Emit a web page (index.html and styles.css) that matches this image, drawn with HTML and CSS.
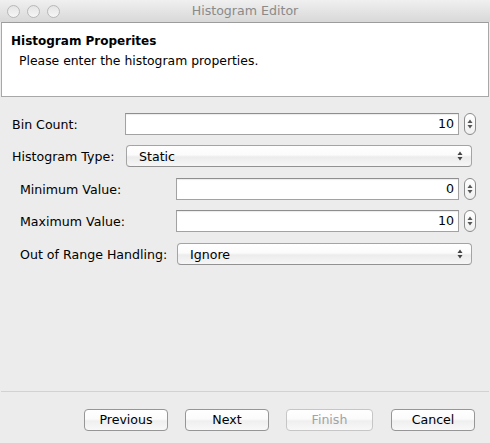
FILE: index.html
```html
<!DOCTYPE html>
<html>
<head>
<meta charset="utf-8">
<link rel="stylesheet" href="styles.css">
</head>
<body>
<div class="window">
  <div class="titlebar">
    <div class="lights">
      <span class="light"></span><span class="light"></span><span class="light"></span>
    </div>
    <div class="title">Histogram Editor</div>
  </div>
  <div class="header">
    <div class="header-title">Histogram Properites</div>
    <div class="header-sub">Please enter the histogram properties.</div>
  </div>
  <div class="form">
    <div class="row r1">
      <label class="lbl w-bin">Bin Count:</label>
      <div class="field">10</div>
      <div class="spin"><svg width="12" height="22" viewBox="0 0 12 22"><path d="M6 6.5 L8.5 10 L3.5 10 Z" fill="#555"/><path d="M6 15.5 L8.5 12 L3.5 12 Z" fill="#555"/></svg></div>
    </div>
    <div class="row r2">
      <label class="lbl w-type">Histogram Type:</label>
      <div class="combo"><span>Static</span><svg class="arr" width="8" height="12" viewBox="0 0 8 12"><path d="M4 1.5 L6.5 5 L1.5 5 Z" fill="#444"/><path d="M4 10.5 L6.5 7 L1.5 7 Z" fill="#444"/></svg></div>
    </div>
    <div class="nested">
      <div class="row r3">
        <label class="lbl w-min">Minimum Value:</label>
        <div class="field">0</div>
        <div class="spin"><svg width="12" height="22" viewBox="0 0 12 22"><path d="M6 6.5 L8.5 10 L3.5 10 Z" fill="#555"/><path d="M6 15.5 L8.5 12 L3.5 12 Z" fill="#555"/></svg></div>
      </div>
      <div class="row r4">
        <label class="lbl w-min">Maximum Value:</label>
        <div class="field">10</div>
        <div class="spin"><svg width="12" height="22" viewBox="0 0 12 22"><path d="M6 6.5 L8.5 10 L3.5 10 Z" fill="#555"/><path d="M6 15.5 L8.5 12 L3.5 12 Z" fill="#555"/></svg></div>
      </div>
      <div class="row r5">
        <label class="lbl w-oor">Out of Range Handling:</label>
        <div class="combo"><span>Ignore</span><svg class="arr" width="8" height="12" viewBox="0 0 8 12"><path d="M4 1.5 L6.5 5 L1.5 5 Z" fill="#444"/><path d="M4 10.5 L6.5 7 L1.5 7 Z" fill="#444"/></svg></div>
      </div>
    </div>
  </div>
  <div class="sep"></div>
  <div class="buttons">
    <button class="btn">Previous</button>
    <button class="btn">Next</button>
    <button class="btn disabled">Finish</button>
    <button class="btn">Cancel</button>
  </div>
</div>
</body>
</html>
```
FILE: styles.css
```css
* { box-sizing: border-box; }
html, body { margin: 0; padding: 0; }
body {
  width: 490px;
  height: 443px;
  background: #ececec;
  font-family: "DejaVu Sans", "Liberation Sans", sans-serif;
  font-size: 12.6px;
  color: #000;
  overflow: hidden;
}
.window { width: 490px; height: 443px; display: flex; flex-direction: column; }
.titlebar {
  height: 22px;
  background: linear-gradient(#f0f0f0, #d8d8d8);
  display: flex;
  align-items: center;
  position: relative;
  flex: none;
}
.lights { display: flex; gap: 7px; padding-left: 7px; }
.light {
  width: 13px; height: 13px; border-radius: 50%;
  border: 1px solid #b8b8b8;
  background: linear-gradient(#e4e4e4, #f6f6f6);
}
.title {
  position: absolute; left: 0; right: 0; top: 0; height: 22px;
  line-height: 22px; text-align: center;
  color: #8a8a8a; font-size: 12.6px;
}
.header {
  margin: 0 1px;
  height: 75px;
  background: #fff;
  border: 1px solid #a8a8a8;
  border-top-color: #9c9c9c;
  padding: 8px 0 0 9px;
  flex: none;
}
.header-title { font-weight: bold; font-size: 12px; height: 20px; line-height: 20px; }
.header-sub { padding-left: 8px; font-size: 12.4px; line-height: 20px; }
.form { padding: 16px 14px 0 12px; display: flex; flex-direction: column; }
.nested { padding-left: 8px; display: flex; flex-direction: column; }
.row { display: flex; align-items: center; height: 22px; }
.r2 { margin-top: 10px; }
.r3 { margin-top: 11px; }
.r4 { margin-top: 10px; }
.r5 { margin-top: 11px; }
.lbl { flex: none; white-space: nowrap; }
.w-bin { width: 113px; }
.w-type { width: 114px; }
.w-min { width: 156px; }
.w-oor { width: 157px; }
.field {
  flex: 1;
  height: 22px;
  background: #fff;
  border: 1px solid #a2a2a2;
  border-top-color: #8e8e8e;
  box-shadow: inset 0 1px 1px rgba(0,0,0,0.08);
  text-align: right;
  padding-right: 4px;
  line-height: 20px;
}
.spin {
  flex: none;
  width: 12px; height: 22px;
  margin-left: 5px;
  border: 1px solid #8c8c8c;
  border-radius: 6px;
  background: linear-gradient(#ffffff, #f0f0f0);
  display: flex; align-items: center; justify-content: center;
  overflow: hidden;
}
.spin svg { display: block; flex: none; }
.combo {
  flex: 1;
  margin-right: 4px;
  height: 22px;
  border: 1px solid #a4a4a4;
  border-bottom-color: #929292;
  border-radius: 4px;
  background: linear-gradient(#ffffff 0%, #fbfbfb 45%, #ececec 55%, #f6f6f6 100%);
  display: flex; align-items: center; justify-content: space-between;
  padding: 0 7px 0 12px;
}
.arr { display: block; }
.sep { height: 1px; background: #d2d2d2; margin: 126px 1px 0 1px; flex: none; }
.buttons { display: flex; padding: 17px 0 0 84px; gap: 0; }
.btn {
  font-family: inherit; font-size: 12.6px; color: #000;
  height: 22px;
  border: 1px solid #969696;
  border-radius: 4px;
  background: linear-gradient(#ffffff 0%, #fbfbfb 45%, #efefef 55%, #f8f8f8 100%);
  padding: 0;
  margin: 0;
  line-height: 20px;
}
.btn:nth-child(1) { width: 84px; }
.btn:nth-child(2) { width: 84px; margin-left: 17px; }
.btn:nth-child(3) { width: 87px; margin-left: 17px; }
.btn:nth-child(4) { width: 84px; margin-left: 18px; }
.btn.disabled { color: #a3a3a3; border-color: #c6c6c6; }
```
